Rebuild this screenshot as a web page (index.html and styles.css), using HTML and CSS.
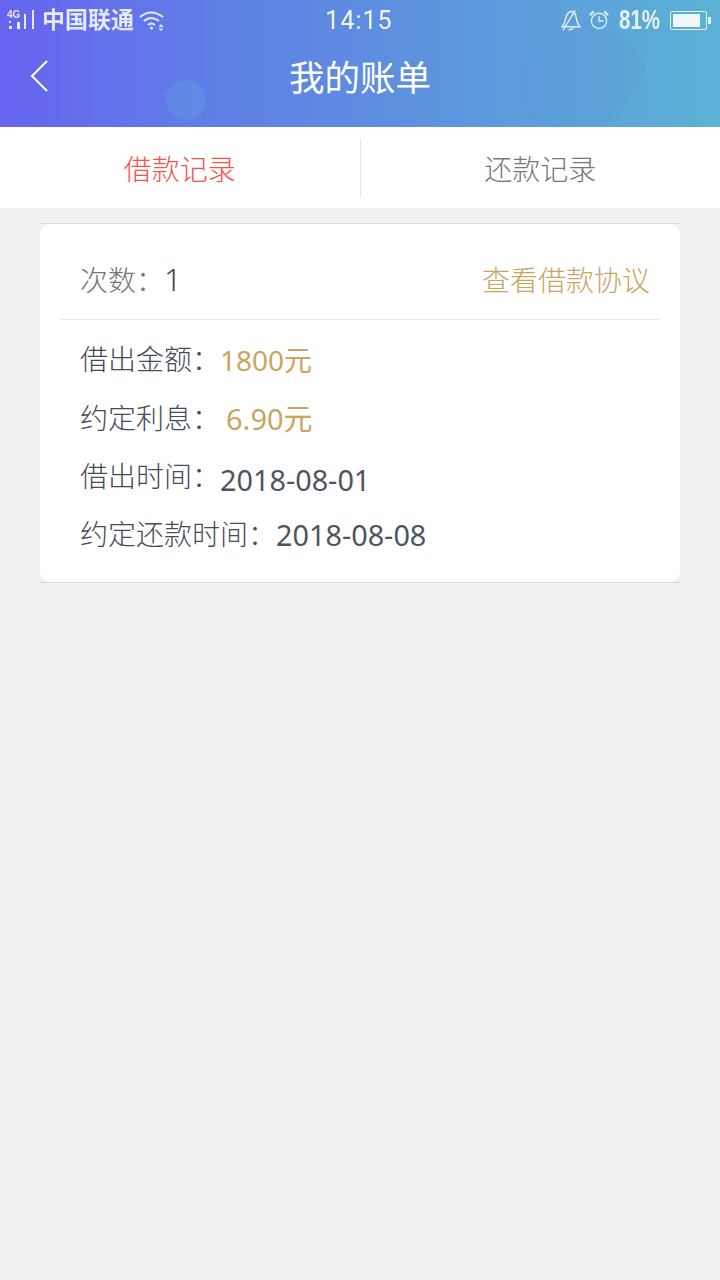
FILE: index.html
```html
<!DOCTYPE html>
<html lang="zh-CN">
<head>
  <meta charset="UTF-8">
  <meta name="viewport" content="width=device-width, initial-scale=1.0">
  <title>我的账单</title>
  <link rel="stylesheet" href="styles.css">
</head>
<body>
  <header class="header">
    <span class="bubble"></span>
    <span class="sheen"></span>

    <div class="status-bar">
      <div class="status-left">
        <svg class="signal" width="30" height="24" viewBox="0 0 30 24">
          <text x="0" y="10" class="signal-text">4G</text>
          <rect x="2" y="18" width="3" height="3" fill="#e6e9fb"/>
          <rect x="2" y="13" width="2" height="2" fill="#e6e9fb"/>
          <rect x="10" y="14" width="3" height="7" fill="#e6e9fb"/>
          <rect x="17" y="6" width="2" height="15" fill="#e6e9fb"/>
          <rect x="25" y="2" width="2" height="19" fill="#e6e9fb"/>
        </svg>
        <span class="carrier">中国联通</span>
        <svg class="wifi" width="26" height="22" viewBox="0 0 26 22" fill="none" stroke="#e6e9fb" stroke-width="2">
          <path d="M1 8 Q12 -1 24 8"/>
          <path d="M5 12 Q12 6 20 12"/>
          <path d="M9 16 Q12 13 16 16"/>
          <circle cx="12.500" cy="19" r="1.500" fill="#e6e9fb" stroke="none"/>
          <path d="M22 15 L24.500 18 L19.500 18 Z" fill="#e6e9fb" stroke="none"/>
          <path d="M22 22 L24.500 19.500 L19.500 19.500 Z" fill="#e6e9fb" stroke="none"/>
        </svg>
      </div>
      <span class="time">14:15</span>
      <div class="status-right">
        <svg width="20" height="22" viewBox="0 0 21 22" fill="none" stroke="#dfeef6" stroke-width="1.500">
          <path d="M1 18 Q4 15 5 9 Q6 3 11 2 Q16 3 16 9 Q17 15 20 18 Z"/>
          <path d="M2 22 L15 1"/>
          <path d="M8 21 Q11 22 13 19"/>
        </svg>
        <svg class="alarm" width="20" height="22" viewBox="0 0 21 22" fill="none" stroke="#dfeef6" stroke-width="1.500">
          <circle cx="10.500" cy="12" r="8"/>
          <path d="M10.500 7 V12 H15"/>
          <path d="M1 6 L5 2 M16 2 L20 6" stroke-width="2.500"/>
        </svg>
        <span class="percent">81%</span>
        <div class="battery">
          <div class="battery-fill"></div>
        </div>
        <span class="battery-tip"></span>
      </div>
    </div>

    <div class="nav-bar">
      <svg class="back" width="18" height="32" viewBox="0 0 18 32" fill="none" stroke="#fff" stroke-width="2">
        <path d="M17 1 L2 16 L17 31"/>
      </svg>
      <h1 class="title">我的账单</h1>
    </div>
  </header>

  <div class="tabs">
    <div class="tab tab-active">借款记录</div>
    <div class="tab tab-split">还款记录</div>
  </div>

  <section class="card">
    <div class="card-inner">
      <div class="card-head">
        <div class="count"><span class="count-label">次数：</span><span class="count-num">1</span></div>
        <a class="link">查看借款协议</a>
      </div>
      <div class="card-body">
        <div class="row"><span class="label">借出金额：</span><span class="gold">1800元</span></div>
        <div class="row row-2"><span class="label">约定利息：</span><span class="gold gold-offset">6.90元</span></div>
        <div class="row row-3"><span class="label">借出时间：</span><span class="date date-low">2018-08-01</span></div>
        <div class="row row-4"><span class="label">约定还款时间：</span><span class="date">2018-08-08</span></div>
      </div>
    </div>
  </section>
</body>
</html>
```

FILE: styles.css
```css
* {
  box-sizing: border-box;
}

body {
  margin: 0;
  min-height: 1280px;
  background-color: #f0f1f3;
  font-family: "Noto Sans CJK SC", "Noto Sans", sans-serif;
  color: #4e5560;
}

.header {
  position: relative;
  height: 127px;
  overflow: hidden;
  background: linear-gradient(90deg, #6763f0 0%, #5f7fe6 30%, #5d93de 60%, #5bb2d5 100%);
}

.bubble {
  position: absolute;
  left: 166px;
  top: 80px;
  width: 40px;
  height: 40px;
  border-radius: 50%;
  background-color: rgba(100, 150, 225, 0.5);
}

.sheen {
  position: absolute;
  left: 530px;
  top: 20px;
  width: 100px;
  height: 120px;
  border-radius: 30px;
  transform: rotate(40deg);
  background-color: rgba(95, 150, 220, 0.14);
}

.status-bar {
  position: relative;
  display: flex;
  justify-content: space-between;
  align-items: center;
  height: 40px;
  padding: 0 9px 0 7px;
  filter: blur(0.4px);
}

.status-left,
.status-right {
  display: flex;
  align-items: center;
  width: 280px;
}

.status-right {
  justify-content: flex-end;
}

.signal-text {
  font-family: "Liberation Sans", sans-serif;
  font-size: 10px;
  font-weight: 700;
  fill: #e6e9fb;
}

.carrier {
  margin-left: 5px;
  margin-top: -4px;
  font-size: 23px;
  font-weight: 700;
  color: #e6e9fb;
}

.wifi {
  margin-left: 5px;
}

.time {
  font-family: "Roboto", sans-serif;
  font-size: 25px;
  letter-spacing: 1px;
  color: rgba(255, 255, 255, 0.92);
}

.alarm {
  margin-left: 8px;
}

.percent {
  display: inline-block;
  width: 41px;
  margin-left: 10px;
  font-family: "Liberation Sans", sans-serif;
  font-size: 27px;
  font-weight: 700;
  color: #e4f1f6;
  transform: scaleX(0.76);
  transform-origin: left center;
}

.battery {
  margin-left: 10px;
  width: 37px;
  height: 19px;
  padding: 2px;
  border: 1px solid #e4f1f6;
  border-radius: 2px;
}

.battery-fill {
  width: 27px;
  height: 100%;
  background-color: #eef7fa;
}

.battery-tip {
  width: 3px;
  height: 7px;
  margin-left: 1px;
  background-color: #e4f1f6;
}

.nav-bar {
  position: relative;
  display: flex;
  justify-content: center;
  align-items: center;
  height: 74px;
  padding-bottom: 4px;
}

.back {
  position: absolute;
  left: 30px;
  top: 20px;
}

.title {
  margin: 0;
  font-size: 35.500px;
  font-weight: 400;
  color: #fff;
}

.tabs {
  display: flex;
  align-items: center;
  height: 81px;
  background-color: #fff;
}

.tab {
  flex: 1;
  height: 60px;
  line-height: 60px;
  margin-top: 1px;
  text-align: center;
  font-size: 28px;
  font-weight: 300;
  color: #777;
}

.tab-active {
  color: #f9504c;
}

.tab-split {
  border-left: 1px solid #e4e4e4;
}

.card {
  margin: 15px 40px 0;
  height: 360px;
  border-top: 1px solid #d8dadc;
  border-bottom: 1px solid #d8dadc;
}

.card-inner {
  height: 100%;
  background-color: #fff;
  border-radius: 10px;
}

.card-head {
  display: flex;
  justify-content: space-between;
  align-items: center;
  height: 96px;
  margin: 0 20px;
  padding: 14px 10px 0 20px;
  border-bottom: 1px solid #e8e9eb;
  font-size: 28px;
  font-weight: 300;
}

.count-label {
  color: #777;
}

.count-num {
  font-family: "Noto Sans", sans-serif;
  font-size: 31px;
  color: #444;
}

.link {
  color: #c9a55f;
}

.card-body {
  padding: 18px 0 0 40px;
  font-size: 28px;
}

.row {
  display: flex;
  height: 40px;
  line-height: 40px;
}

.row-2 {
  margin-top: 19px;
}

.row-3 {
  margin-top: 18px;
}

.row-4 {
  margin-top: 18px;
}

.label {
  font-weight: 300;
  color: #454c57;
}

.gold {
  margin-top: 2px;
  font-family: "Noto Sans", "Noto Sans CJK SC", sans-serif;
  font-size: 28px;
  color: #c9a55f;
}

.gold-offset {
  margin-top: 2px;
  margin-left: 6px;
  font-size: 29px;
}

.date {
  margin-top: 2px;
  font-family: "Noto Sans", sans-serif;
  font-size: 28.800px;
  color: #4e5560;
}

.date-low {
  margin-top: 5px;
}
```
